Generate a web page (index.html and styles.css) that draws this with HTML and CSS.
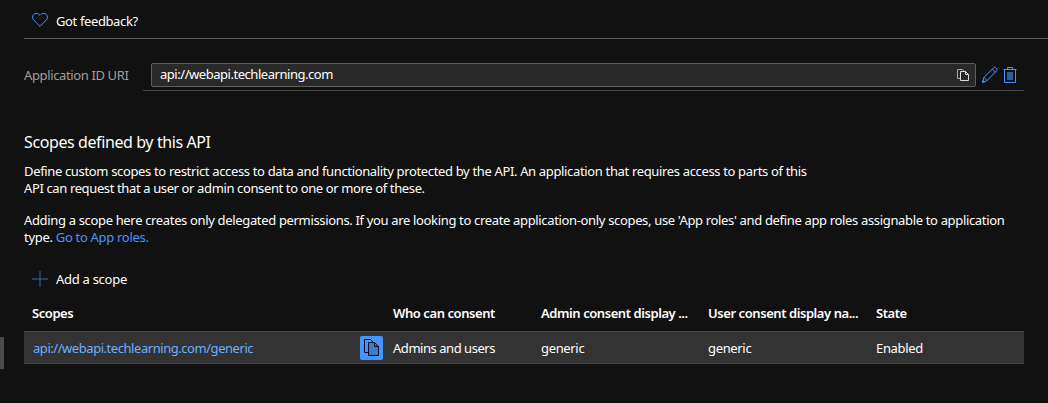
FILE: index.html
```html
<!DOCTYPE html>
<html lang="en">
<head>
<meta charset="utf-8">
<title>Expose an API</title>
<link rel="stylesheet" href="styles.css">
</head>
<body>
<div class="page">
  <div class="splitter"></div>
  <main class="content">
    <div class="toolbar">
      <svg class="icon-heart" width="16" height="16" viewBox="0 0 16 16"><path d="M8 14.300 1.700 8C.2 6.500.2 3.900 1.700 2.500c1.500-1.500 4-1.500 5.400 0L8 3.400l.9-.9c1.400-1.500 3.900-1.500 5.400 0 1.500 1.400 1.500 4 0 5.500z"/></svg>
      <span class="toolbar-text">Got feedback?</span>
    </div>
    <div class="uri-row">
      <span class="uri-label">Application ID URI</span>
      <div class="uri-field">
        <div class="uri-input">
          <span class="uri-value">api://webapi.techlearning.com</span>
          <svg class="icon-copy-small" width="12" height="13" viewBox="0 0 12 13"><path class="back" d="M3.500 9.500h-3v-9h5l2 2"/><path d="M3.500 2.500h5l3 3v6h-8z"/><path d="M8.500 2.500v3h3"/></svg>
        </div>
        <svg class="icon-edit" width="16" height="16" viewBox="0 0 16 16"><path d="M.6 15.400 1.700 10.700 11.500.9c.8-.7 2-.6 2.800.2s.9 2 .2 2.800L4.900 13.700z"/><path d="m10.300 2.100 3.200 3.200M1.700 10.700c1.200.2 2.500 1.400 3.200 3M.6 15.400l2-.5-1.500-1.500z"/></svg>
        <svg class="icon-delete" width="14" height="16" viewBox="0 0 14 16"><path class="bin-core" d="M4 5h6v8H4z"/><path d="M.5 2.500h13M4.500 2V.5h5V2M1.500 2.500v13h11v-13"/></svg>
      </div>
    </div>
    <h2 class="title">Scopes defined by this API</h2>
    <p class="intro"><span class="intro-a">Define custom scopes to restrict access to data and functionality protected by the API. An application that requires access to parts of this</span><br><span class="intro-b">API can request that a user or admin consent to one or more of these.</span></p>
    <p class="note"><span class="note-a">Adding a scope here creates only delegated permissions. If you are looking to create application-only scopes, use 'App roles' and define app roles assignable to application</span><br><span class="note-b">type. <a class="link">Go to App roles.</a></span></p>
    <div class="add">
      <svg class="icon-plus" width="16" height="16" viewBox="0 0 16 16"><path d="M8 0v16M0 8h16"/></svg>
      <span class="add-text">Add a scope</span>
    </div>
    <div class="grid head">
      <span>Scopes</span><span>Who can consent</span><span>Admin consent display ...</span><span>User consent display na...</span><span>State</span>
    </div>
    <div class="grid row">
      <div class="scope-cell">
        <a class="scope-link">api://webapi.techlearning.com/generic</a>
        <div class="copy-button"><svg width="16" height="18" viewBox="0 0 16 18"><path d="M4.500 13.500h-4V.5h6l3 3"/><path class="front" d="M4.500 3.500h6l4 4v9h-10z"/><path d="M10.500 3.500v4h4"/></svg></div>
      </div>
      <span class="cell">Admins and users</span><span class="cell">generic</span><span class="cell">generic</span><span class="cell">Enabled</span>
    </div>
  </main>
</div>
</body>
</html>
```
FILE: styles.css
```css
* { box-sizing: border-box; }
body { margin: 0; background: #111; color: #fff; font: 13px/17px "Noto Sans", "Open Sans", sans-serif; letter-spacing: -0.34px; white-space: nowrap; overflow: hidden; }
.page { display: flex; height: 403px; border-bottom: 1px solid #0b0b0b; }
.splitter { width: 4px; height: 32px; margin: 337px 20px 0 0; background: #4b4b4b; flex: none; }
.content { flex: 1; min-width: 0; }
svg { display: block; fill: none; stroke: #4894fe; stroke-width: 1; flex: none; overflow: visible; }
.toolbar { height: 39px; display: flex; align-items: center; gap: 8px; padding: 3px 0 0 8px; border-bottom: 1px solid #605e5c; }
.toolbar-text { padding-top: 2px; letter-spacing: -0.38px; }
.icon-heart { margin-top: -1px; }
.uri-row { display: flex; width: 1000px; margin-top: 24px; height: 28px; }
.uri-label { width: 119px; padding-top: 4px; color: #a19f9d; letter-spacing: -0.37px; }
.uri-field { flex: 1; display: flex; padding-left: 8px; border-bottom: 1px solid #484644; }
.uri-input { width: 825px; height: 24px; display: flex; align-items: center; justify-content: space-between; padding: 0 6px 1px 8px; border: 1px solid #605e5c; border-radius: 2px; background: #292929; }
.uri-value { letter-spacing: -0.46px; }
.icon-copy-small { stroke: #ddd; margin-top: 2px; }
.back { stroke: #aaa; }
.icon-edit { margin: 4px 0 0 6px; }
.icon-delete { margin: 4px 0 0 5px; }
.bin-core { fill: #2e5da0; stroke: none; }
.title { margin: 40px 0 0; font-size: 16px; line-height: 22px; font-weight: 400; letter-spacing: -0.4px; }
.intro { margin: 10px 0 0; }
.intro-a { letter-spacing: -0.345px; }
.intro-b { letter-spacing: -0.375px; }
.note { margin: 15px 0 0; }
.note-b { letter-spacing: -0.3px; }
.link { color: #4894fe; }
.add { display: flex; align-items: center; gap: 8px; height: 18px; margin-top: 24px; padding-left: 8px; }
.icon-plus { stroke: #3469b5; margin-top: -1px; }
.add-text { padding-top: 1px; letter-spacing: -0.28px; }
.grid { display: grid; width: 1000px; grid-template-columns: 361px 148px 167px 168px 1fr; padding-left: 8px; align-items: center; }
.head { height: 35px; margin-top: 8px; font-weight: 600; letter-spacing: -0.43px; }
.row { height: 33px; background: #333; border: solid #484848; border-width: 1px 0; }
.cell { padding-top: 2px; letter-spacing: -0.46px; }
.cell + .cell { letter-spacing: -0.34px; }
.scope-cell { display: flex; align-items: center; justify-content: space-between; padding: 0 10px 0 1px; }
.scope-link { color: #6cb0ff; padding-top: 2px; letter-spacing: -0.45px; }
.copy-button { width: 23px; height: 24px; border-radius: 2px; background: #4894fe; padding: 3px 0 0 4px; }
.copy-button svg { stroke: #111; }
.front { fill: #3c7bd3; }
```
